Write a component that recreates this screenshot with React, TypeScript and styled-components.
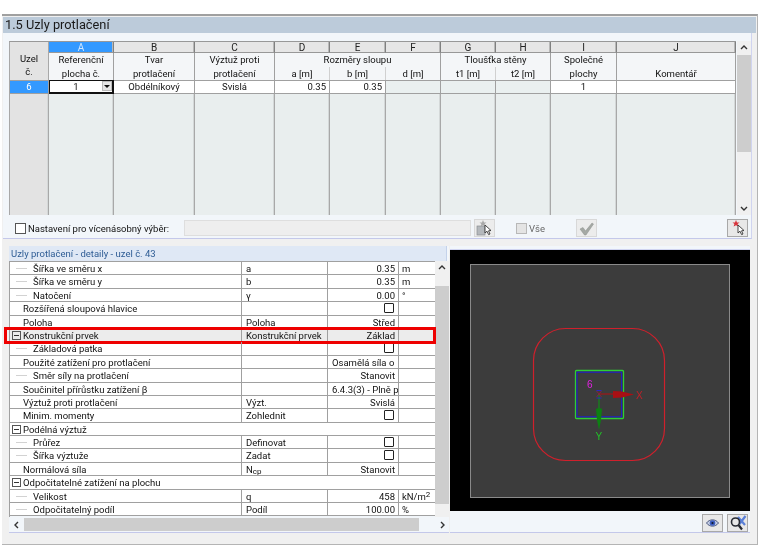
import styled, { createGlobalStyle } from "styled-components";

const GlobalStyle = createGlobalStyle`
  html, body {
    margin: 0;
    padding: 0;
    background: #fff;
  }
  body {
    width: 760px;
    height: 560px;
    overflow: hidden;
    font-family: Roboto, "Liberation Sans", Arial, sans-serif;
    font-size: 9.5px;
    color: #111;
  }
`;

const Page = styled.div`
  width: 760px;
  height: 560px;
  padding: 14px 2px 0 2px;
  box-sizing: border-box;
  filter: blur(0.35px);
`;

const Frame = styled.div`
  height: 531px;
  box-sizing: border-box;
  background: #f0f0f0;
  border-top: 2px solid #a0a0a0;
  border-bottom: 1px solid #b4b4b4;
  border-right: 1px solid #b4b4b4;
  padding: 1px 1px 0 1px;
  display: flex;
  flex-direction: column;
`;

const TitleBar = styled.div`
  height: 16px;
  line-height: 16px;
  background: #bccbda;
  padding-left: 2px;
  font-size: 12.8px;
  color: #1a1a1a;
`;

const TopPanel = styled.div`
  height: 206px;
  margin-right: 4px;
  background: #f2f6fa;
  border-bottom: 1px solid #c4c8ea;
  border-right: 1px solid #d0d4f0;
  padding: 8px 0 0 6px;
  box-sizing: border-box;
  display: flex;
  flex-direction: column;
`;

const TableRow = styled.div`
  display: flex;
  height: 174px;
  flex: none;
`;

const Table = styled.div`
  width: 727px;
  display: grid;
  grid-template-columns: 39px 65px 81px 80px 55px 56px 55px 55px 55px 66px 119px;
  grid-template-rows: 11px 14px 13px 14px 121px;
  border-top: 1px solid #989898;
  border-left: 1px solid #a8a8a8;
  box-sizing: border-box;
`;

const CornerCell = styled.div`
  grid-column: 1;
  grid-row: 1 / 4;
  background: #e3e3e3;
  border-right: 1px solid #a8a8a8;
  text-align: center;
  line-height: 12.5px;
  padding-top: 11px;
`;

const LetterCell = styled.div<{ $active?: boolean }>`
  background: ${(p) => (p.$active ? "#3399ff" : "#e6e6e6")};
  color: ${(p) => (p.$active ? "#cfe6ff" : "#222")};
  border-right: 1px solid #808080;
  border-bottom: 1px solid #989898;
  box-shadow: inset -1px 0 0 #b8b8b8;
  text-align: center;
  line-height: 11px;
  font-size: 10px;
`;

const HeadCell = styled.div<{ $col: number; $span?: number; $row: number; $rows?: number; $divider?: boolean }>`
  grid-column: ${(p) => p.$col} / span ${(p) => p.$span ?? 1};
  grid-row: ${(p) => p.$row} / span ${(p) => p.$rows ?? 1};
  background: #f4f6f8;
  border-right: 1px solid ${(p) => (p.$divider ? "#d0d0d0" : "#a0a0a0")};
  text-align: center;
  line-height: 13px;
  white-space: nowrap;
`;

const DataCell = styled.div<{ $tone?: "white" | "off" | "blue"; $align?: string }>`
  grid-row: 4;
  background: ${(p) => (p.$tone === "off" ? "#eaf0f0" : p.$tone === "blue" ? "#3399ff" : "#fff")};
  color: ${(p) => (p.$tone === "blue" ? "#fff" : "#111")};
  border-top: 1px solid #a0a0a0;
  border-bottom: 1px solid #a0a0a0;
  border-right: 1px solid #a0a0a0;
  text-align: ${(p) => p.$align ?? "center"};
  padding: 0 3px;
  line-height: 12px;
  box-sizing: border-box;
`;

const ComboCell = styled.div`
  grid-row: 4;
  background: #fff;
  border-style: solid;
  border-color: #111;
  border-width: 1px 2px 2px 1px;
  box-sizing: border-box;
  position: relative;
  text-align: center;
  line-height: 11px;
  padding-right: 10px;
`;

const ComboArrow = styled.span`
  position: absolute;
  right: 0;
  top: 0;
  width: 10px;
  height: 10px;
  background: #e6e6e6;
  border: 1px solid #bbb;
  box-sizing: border-box;
  &::after {
    content: "";
    position: absolute;
    left: 1px;
    top: 3px;
    border: 3px solid transparent;
    border-top-color: #111;
  }
`;

const FillCell = styled.div<{ $grey?: boolean }>`
  grid-row: 5;
  background: ${(p) => (p.$grey ? "#e3e3e3" : "#e9eeee")};
  border-right: 1px solid #a8a8a8;
  box-shadow: inset -1px 0 0 #d4d8d8;
`;

const VScroll = styled.div`
  width: 14px;
  flex: none;
  display: flex;
  flex-direction: column;
  background: #f0f0f0;
  margin-left: 1px;
`;

const DetailScroll = styled(VScroll)`
  margin-left: 0;
`;

const ScrollEnd = styled.div<{ $h?: number }>`
  height: ${(p) => p.$h ?? 14}px;
  flex: none;
  display: flex;
  align-items: ${(p) => (p.$h ? "flex-start" : "center")};
  padding-top: ${(p) => (p.$h ? 3 : 0)}px;
  box-sizing: border-box;
  justify-content: center;
  color: #333;
`;

const VThumb = styled.div<{ $h: number }>`
  height: ${(p) => p.$h}px;
  flex: none;
  background: #cdcdcd;
`;

const VGap = styled.div`
  flex: 1;
`;

const MultiBar = styled.div`
  flex: 1;
  display: flex;
  align-items: center;
  padding: 3px 0 0 6px;
`;

const CheckBox = styled.span<{ $dim?: boolean }>`
  width: 11px;
  height: 11px;
  flex: none;
  box-sizing: border-box;
  background: ${(p) => (p.$dim ? "#e4e4e4" : "#fff")};
  border: 1px solid ${(p) => (p.$dim ? "#b8b8b8" : "#555")};
  display: inline-block;
`;

const MultiLabel = styled.span`
  margin-left: 2px;
  width: 156px;
  flex: none;
  white-space: nowrap;
`;

const MultiInput = styled.div`
  width: 287px;
  height: 16px;
  flex: none;
  background: #eeeeee;
  border: 1px solid #dedede;
  box-sizing: border-box;
`;

const ToolButton = styled.div<{ $flat?: boolean }>`
  width: 21px;
  height: 18px;
  flex: none;
  box-sizing: border-box;
  background: ${(p) => (p.$flat ? "#ececec" : "#e8e8e8")};
  border: 1px solid ${(p) => (p.$flat ? "#d8d8d8" : "#a8a8a8")};
  display: flex;
  align-items: center;
  justify-content: center;
`;

const Spacer = styled.div<{ $w?: number }>`
  ${(p) => (p.$w ? `width: ${p.$w}px; flex: none;` : "flex: 1;")}
`;

const AllLabel = styled.span`
  margin-left: 2px;
  width: 14px;
  flex: none;
  color: #666;
`;

const LowerRow = styled.div`
  flex: 1;
  display: flex;
  padding: 7px 6px 0 6px;
  gap: 1px;
  min-height: 0;
`;

const DetailPanel = styled.div`
  width: 440px;
  flex: none;
  height: 286px;
  border-bottom: 1px solid #c4c8ea;
  background: #f2f6fa;
  display: flex;
  flex-direction: column;
`;

const DetailTitle = styled.div`
  height: 15px;
  line-height: 15px;
  background: #dfe8f5;
  color: #2e5c94;
  padding-left: 2px;
  margin-right: 2px;
  border-right: 1px solid #c4d2ea;
`;

const DetailBody = styled.div`
  display: flex;
  height: 256px;
  flex: none;
`;

const PropGrid = styled.div`
  width: 426px;
  flex: none;
  border-top: 1px solid #a0a0a0;
  border-left: 1px solid #a0a0a0;
  box-sizing: border-box;
  display: flex;
  flex-direction: column;
`;

const PropRow = styled.div<{ $head?: boolean }>`
  height: 13.4px;
  flex: none;
  display: grid;
  grid-template-columns: ${(p) => (p.$head ? "1fr" : "232px 86px 71px 1fr")};
  background: #fff;
  border-bottom: 1px solid #a0a0a0;
  box-sizing: border-box;
  line-height: 13px;
`;

const SelectedRow = styled(PropRow)`
  background: #ececec;
  position: relative;
`;

const RedOutline = styled.div`
  position: absolute;
  left: -6px;
  right: -1px;
  top: -2px;
  bottom: -3px;
  border: 3px solid #ee0000;
  pointer-events: none;
`;

const NameCell = styled.div<{ $level: 0 | 1 | 2; $head?: boolean }>`
  position: relative;
  padding-left: ${(p) => (p.$level === 2 ? 23 : 13)}px;
  border-right: ${(p) => (p.$head ? "none" : "1px solid #a0a0a0")};
  white-space: nowrap;
  overflow: hidden;
`;

const TreeTick = styled.span`
  position: absolute;
  left: 6px;
  top: 0;
  width: 11px;
  height: 6px;
  border-bottom: 1px solid #d2d2d2;
`;

const Expander = styled.span`
  position: absolute;
  left: 2px;
  top: 2px;
  width: 9px;
  height: 9px;
  border: 1px solid #555;
  box-sizing: border-box;
  &::after {
    content: "";
    position: absolute;
    left: 1px;
    right: 1px;
    top: 3px;
    height: 1px;
    background: #333;
  }
`;

const SymbolCell = styled.div`
  padding-left: 4px;
  border-right: 1px solid #a0a0a0;
  white-space: nowrap;
  overflow: hidden;
`;

const ValueCell = styled.div<{ $left?: boolean }>`
  border-right: 1px solid #a0a0a0;
  padding: 0 3px 0 4px;
  text-align: ${(p) => (p.$left ? "left" : "right")};
  white-space: nowrap;
  overflow: hidden;
`;

const ValueCheck = styled.span`
  float: right;
  width: 10px;
  height: 10px;
  margin: 1px 1px 0 0;
  border: 1.5px solid #222;
  border-radius: 1px;
  box-sizing: border-box;
  background: #fff;
`;

const UnitCell = styled.div`
  padding-left: 3px;
  white-space: nowrap;
`;

const HScroll = styled.div`
  display: flex;
  height: 13px;
  flex: none;
  align-items: stretch;
  margin-top: 1px;
`;

const HEnd = styled.div`
  width: 15px;
  flex: none;
  display: flex;
  align-items: center;
  justify-content: center;
  color: #333;
`;

const HThumb = styled.div`
  width: 395px;
  flex: none;
  background: #cdcdcd;
`;

const ViewPanel = styled.div`
  flex: 1;
  height: 286px;
  display: flex;
  flex-direction: column;
  border-bottom: 1px solid #c4c8ea;
  background: #f2f6fa;
`;

const BlackBox = styled.div`
  height: 262px;
  flex: none;
  margin-top: 3px;
  background: #000;
  border-top: 1px solid #d0d4f0;
  padding: 14px 20px 13px;
  box-sizing: border-box;
`;

const Viewport = styled.div`
  width: 100%;
  height: 100%;
  background: #3c3c3c;
  border: 1px solid #8a8a8a;
  box-sizing: border-box;
`;

const ViewButtons = styled.div`
  flex: 1;
  display: flex;
  justify-content: flex-end;
  align-items: center;
  gap: 4px;
  padding: 2px 2px 0 0;
`;

const SmallSub = styled.span`
  sub, sup {
    font-size: 8px;
    line-height: 0;
  }
  sub {
    vertical-align: -1px;
  }
  sup {
    vertical-align: 3px;
  }
`;

const Chevron = ({ dir }: { dir: "up" | "down" | "left" | "right" }) => {
  const paths = {
    up: "M1 5 L4 2 L7 5",
    down: "M1 3 L4 6 L7 3",
    left: "M5 1 L2 4 L5 7",
    right: "M3 1 L6 4 L3 7",
  };
  return (
    <svg width="8" height="8" viewBox="0 0 8 8">
      <path d={paths[dir]} fill="none" stroke="#333" strokeWidth="1.4" />
    </svg>
  );
};

const PointerIcon = ({ star = "#d8343c", doc = false }: { star?: string; doc?: boolean }) => (
  <svg width="17" height="16" viewBox="0 0 17 16">
    {doc && <rect x="1" y="6" width="8" height="9" fill="#b4b8bc" stroke="#8a8e92" strokeWidth="0.7" />}
    <path d="M7 0 L8 2.4 L10.5 2.4 L8.6 4 L9.4 6.6 L7 5.2 L4.6 6.6 L5.4 4 L3.5 2.4 L6 2.4 Z" fill={star} />
    <path d="M9 5 L9 13 L11 11.2 L12.6 14.6 L14 14 L12.5 10.8 L15 10.5 Z" fill="#fff" stroke="#333" strokeWidth="0.9" />
  </svg>
);

const CheckIcon = () => (
  <svg width="17" height="15" viewBox="0 0 17 15">
    <path d="M2 8 L5 6.5 L7.5 10 L14 2 L15.5 3 L8 14 L6.5 14 Z" fill="#a4a8a4" stroke="#8c908c" strokeWidth="0.5" />
  </svg>
);

const EyeIcon = () => (
  <svg width="13" height="10" viewBox="0 0 13 10">
    <path d="M0.5 5 C3.5 0.8 9.5 0.8 12.5 5 C9.5 9.2 3.5 9.2 0.5 5 Z" fill="#c8d0e4" stroke="#3c4a74" strokeWidth="0.9" />
    <circle cx="6.5" cy="5" r="2.8" fill="#3a5cc0" />
    <circle cx="6.5" cy="5" r="1.1" fill="#10182c" />
  </svg>
);

const ZoomResetIcon = () => (
  <svg width="18" height="16" viewBox="0 0 18 16">
    <path d="M9 2 L16 10 M16.5 1 L10.5 9" stroke="#5a80d8" strokeWidth="2.2" />
    <circle cx="6.5" cy="7" r="4" fill="none" stroke="#262a32" strokeWidth="1.6" />
    <path d="M9.5 10 L13 14.5" stroke="#262a32" strokeWidth="2.2" />
  </svg>
);

const AxisDiagram = () => (
  <svg width="258" height="233" viewBox="471 265 258 233">
    <rect x="533.5" y="328.5" width="131" height="132" rx="32" fill="none" stroke="#d0202c" strokeWidth="1.2" />
    <rect x="575.5" y="370.5" width="48" height="48" rx="1" fill="none" stroke="#2ed032" strokeWidth="1.3" />
    <rect x="577" y="372.2" width="44.6" height="44.6" fill="none" stroke="#2020c8" strokeWidth="1.1" />
    <text x="587" y="388" fontSize="10" fill="#e020e0" fontFamily="Liberation Sans, sans-serif">6</text>
    <path d="M599 394 H614" stroke="#a01418" strokeWidth="1.2" />
    <path d="M613 391 L622 391.5 L634 394.5 L622 397.5 L613 398 Z" fill="#a81014" />
    <path d="M599 394 V409" stroke="#128a18" strokeWidth="1.2" />
    <path d="M596 408.5 L602 408.5 L601 420 L599 430 L597 420 Z" fill="#0c8012" />
    <path d="M596.5 391 L601.5 397 M601.5 391 L596.5 397" stroke="#8c2040" strokeWidth="0.9" />
    <path d="M596.5 390.5 H601.5 M596.5 398 H601.5" stroke="#2828c0" strokeWidth="1" />
    <text x="636" y="398.5" fontSize="10" fill="#c02028" fontFamily="Liberation Sans, sans-serif">X</text>
    <text x="595.5" y="440" fontSize="10" fill="#22c028" fontFamily="Liberation Sans, sans-serif">Y</text>
  </svg>
);

type Row = {
  name: string;
  level: 0 | 1 | 2;
  symbol?: React.ReactNode;
  value?: string;
  check?: boolean;
  left?: boolean;
  unit?: React.ReactNode;
  head?: boolean;
  selected?: boolean;
  expander?: boolean;
};

const rows: Row[] = [
  { name: "Šířka ve směru x", level: 2, symbol: "a", value: "0.35", unit: "m" },
  { name: "Šířka ve směru y", level: 2, symbol: "b", value: "0.35", unit: "m" },
  { name: "Natočení", level: 2, symbol: "γ", value: "0.00", unit: "°" },
  { name: "Rozšířená sloupová hlavice", level: 1, check: true },
  { name: "Poloha", level: 1, symbol: "Poloha", value: "Střed" },
  { name: "Konstrukční prvek", level: 1, symbol: "Konstrukční prvek", value: "Základ", selected: true, expander: true },
  { name: "Základová patka", level: 2, check: true },
  { name: "Použité zatížení pro protlačení", level: 1, value: "Osamělá síla o", left: true },
  { name: "Směr síly na protlačení", level: 2, value: "Stanovit" },
  { name: "Součinitel přírůstku zatížení β", level: 1, value: "6.4.3(3) - Plně p", left: true },
  { name: "Výztuž proti protlačení", level: 1, symbol: "Výzt.", value: "Svislá" },
  { name: "Minim. momenty", level: 1, symbol: "Zohlednit", check: true },
  { name: "Podélná výztuž", level: 1, head: true, expander: true },
  { name: "Průřez", level: 2, symbol: "Definovat", check: true },
  { name: "Šířka výztuže", level: 2, symbol: "Zadat", check: true },
  { name: "Normálová síla", level: 1, symbol: <>N<sub>cp</sub></>, value: "Stanovit" },
  { name: "Odpočitatelné zatížení na plochu", level: 1, head: true, expander: true },
  { name: "Velikost", level: 2, symbol: "q", value: "458", unit: <>kN/m<sup>2</sup></> },
  { name: "Odpočitatelný podíl", level: 2, symbol: "Podíl", value: "100.00", unit: "%" },
];

const PropertyRow = ({ row }: { row: Row }) => {
  const RowTag = row.selected ? SelectedRow : PropRow;
  return (
    <RowTag $head={row.head}>
      <NameCell $level={row.level} $head={row.head}>
        {row.expander && <Expander />}
        {row.level === 2 && <TreeTick />}
        {row.name}
      </NameCell>
      {!row.head && (
        <>
          <SymbolCell><SmallSub>{row.symbol}</SmallSub></SymbolCell>
          <ValueCell $left={row.left}>
            {row.check ? <ValueCheck /> : row.value}
          </ValueCell>
          <UnitCell><SmallSub>{row.unit}</SmallSub></UnitCell>
        </>
      )}
      {row.selected && <RedOutline />}
    </RowTag>
  );
};

const letters = ["B", "C", "D", "E", "F", "G", "H", "I", "J"];

export default function App() {
  return (
    <Page>
      <GlobalStyle />
      <Frame>
        <TitleBar>1.5 Uzly protlačení</TitleBar>
        <TopPanel>
          <TableRow>
            <Table>
              <CornerCell>Uzel<br />č.</CornerCell>
              <LetterCell $active>A</LetterCell>
              {letters.map((l) => (
                <LetterCell key={l}>{l}</LetterCell>
              ))}

              <HeadCell $col={2} $row={2}>Referenční</HeadCell>
              <HeadCell $col={2} $row={3}>plocha č.</HeadCell>
              <HeadCell $col={3} $row={2}>Tvar</HeadCell>
              <HeadCell $col={3} $row={3}>protlačení</HeadCell>
              <HeadCell $col={4} $row={2}>Výztuž proti</HeadCell>
              <HeadCell $col={4} $row={3}>protlačení</HeadCell>
              <HeadCell $col={5} $span={3} $row={2}>Rozměry sloupu</HeadCell>
              <HeadCell $col={5} $row={3} $divider>a [m]</HeadCell>
              <HeadCell $col={6} $row={3} $divider>b [m]</HeadCell>
              <HeadCell $col={7} $row={3}>d [m]</HeadCell>
              <HeadCell $col={8} $span={2} $row={2}>Tloušťka stěny</HeadCell>
              <HeadCell $col={8} $row={3} $divider>t1 [m]</HeadCell>
              <HeadCell $col={9} $row={3}>t2 [m]</HeadCell>
              <HeadCell $col={10} $row={2}>Společné</HeadCell>
              <HeadCell $col={10} $row={3}>plochy</HeadCell>
              <HeadCell $col={11} $row={2} />
              <HeadCell $col={11} $row={3}>Komentář</HeadCell>

              <DataCell $tone="blue">6</DataCell>
              <ComboCell>1<ComboArrow /></ComboCell>
              <DataCell>Obdélníkový</DataCell>
              <DataCell>Svislá</DataCell>
              <DataCell $align="right">0.35</DataCell>
              <DataCell $align="right">0.35</DataCell>
              <DataCell $tone="off" />
              <DataCell $tone="off" />
              <DataCell $tone="off" />
              <DataCell>1</DataCell>
              <DataCell />

              <FillCell $grey />
              {Array.from({ length: 10 }, (_, i) => (
                <FillCell key={i} />
              ))}
            </Table>
            <VScroll>
              <ScrollEnd><Chevron dir="up" /></ScrollEnd>
              <VThumb $h={97} />
              <VGap />
              <ScrollEnd><Chevron dir="down" /></ScrollEnd>
            </VScroll>
          </TableRow>
          <MultiBar>
            <CheckBox />
            <MultiLabel>Nastavení pro vícenásobný výběr:</MultiLabel>
            <MultiInput />
            <Spacer $w={3} />
            <ToolButton $flat><PointerIcon star="#a8a8a8" doc /></ToolButton>
            <Spacer $w={21} />
            <CheckBox $dim />
            <AllLabel>Vše</AllLabel>
            <Spacer $w={33} />
            <ToolButton $flat><CheckIcon /></ToolButton>
            <Spacer />
            <ToolButton><PointerIcon /></ToolButton>
            <Spacer $w={3} />
          </MultiBar>
        </TopPanel>
        <LowerRow>
          <DetailPanel>
            <DetailTitle>Uzly protlačení - detaily - uzel č. 43</DetailTitle>
            <DetailBody>
              <PropGrid>
                {rows.map((r) => (
                  <PropertyRow key={r.name} row={r} />
                ))}
              </PropGrid>
              <DetailScroll>
                <ScrollEnd $h={25}><Chevron dir="up" /></ScrollEnd>
                <VThumb $h={218} />
                <VGap />
              </DetailScroll>
            </DetailBody>
            <HScroll>
              <HEnd><Chevron dir="left" /></HEnd>
              <HThumb />
              <Spacer />
              <HEnd><Chevron dir="right" /></HEnd>
            </HScroll>
          </DetailPanel>
          <ViewPanel>
            <BlackBox>
              <Viewport>
                <AxisDiagram />
              </Viewport>
            </BlackBox>
            <ViewButtons>
              <ToolButton><EyeIcon /></ToolButton>
              <ToolButton><ZoomResetIcon /></ToolButton>
            </ViewButtons>
          </ViewPanel>
        </LowerRow>
      </Frame>
    </Page>
  );
}
